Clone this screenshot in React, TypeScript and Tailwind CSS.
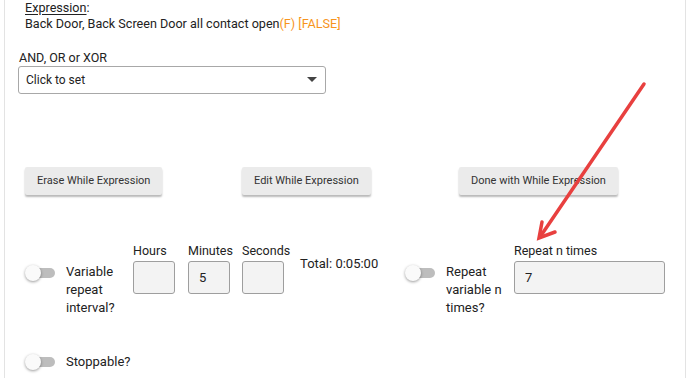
function Toggle() {
  return (
    <div className="relative h-[16px] w-[30px] shrink-0">
      <div className="absolute left-[6px] top-[3px] h-[10px] w-[24px] rounded-full bg-[#bdbdbd]" />
      <div className="absolute left-0 top-0 h-[16px] w-[16px] rounded-full bg-[#fafafa] shadow-[0_1px_3px_rgba(0,0,0,0.4)]" />
    </div>
  );
}

function NumberBox({ label, value, width }: { label: string; value?: string; width: string }) {
  return (
    <div className={`flex flex-col ${width}`}>
      <span className="h-[20px] whitespace-nowrap text-[12.5px] leading-[20px] text-[#222]">{label}</span>
      <div className="flex h-[33px] items-center rounded-[3px] border border-[#9e9e9e] bg-[#f3f3f3] px-[10px] text-[13px] text-[#222]">
        {value}
      </div>
    </div>
  );
}

function ActionButton({ children }: { children: string }) {
  return (
    <button className="h-[28px] rounded-[2px] bg-[#ebebeb] px-[12px] text-[11px] text-[#333] shadow-[0_2px_2px_rgba(0,0,0,0.28)]">
      {children}
    </button>
  );
}

export default function App() {
  return (
    <div className="h-[378px] w-[690px] overflow-hidden bg-white" style={{ fontFamily: 'Roboto, "Liberation Sans", sans-serif' }}>
      <div className="relative ml-[4px] h-[378px] w-[682px] border-x border-[#e3e3e3]">
        <div className="pl-[20px] text-[12.6px] leading-[16px] text-[#222]">
          <div>
            <span className="underline underline-offset-[2px]">Expression</span>:
          </div>
          <div>
            Back Door, Back Screen Door all contact open
            <span className="text-[#f7941d]">(F) [FALSE]</span>
          </div>
        </div>

        <div className="mt-[18px] pl-[14px] text-[12.5px] leading-[15px] text-[#222]">AND, OR or XOR</div>
        <div className="ml-[13px] mt-[1px] flex h-[28px] w-[308px] items-center justify-between rounded-[3px] border border-[#a8a8a8] pl-[7px] pr-[8px] text-[12px] text-[#222]">
          <span>Click to set</span>
          <svg width="10" height="6" viewBox="0 0 10 6">
            <path d="M0 0h10L5 5z" fill="#444" />
          </svg>
        </div>

        <div className="mt-[73px] grid grid-cols-[217px_217px_217px] pl-[20px]">
          <div><ActionButton>Erase While Expression</ActionButton></div>
          <div><ActionButton>Edit While Expression</ActionButton></div>
          <div><ActionButton>Done with While Expression</ActionButton></div>
        </div>

        <div className="mt-[46px] flex pl-[20px]">
          <div className="flex w-[380px]">
            <div className="mt-[24px]"><Toggle /></div>
            <div className="ml-[11px] mt-[22px] w-[60px] text-[13px] leading-[18px] text-[#222]">
              Variable repeat interval?
            </div>
            <div className="ml-[7px] flex">
              <NumberBox label="Hours" width="w-[42px]" />
              <div className="ml-[13px]"><NumberBox label="Minutes" value="5" width="w-[42px]" /></div>
              <div className="ml-[12px]"><NumberBox label="Seconds" width="w-[42px]" /></div>
            </div>
            <div className="ml-[16px] mt-[15px] text-[13px] leading-[16px] text-[#222]">Total: 0:05:00</div>
          </div>
          <div className="flex">
            <div className="mt-[24px]"><Toggle /></div>
            <div className="ml-[11px] mt-[22px] w-[62px] text-[13px] leading-[18px] text-[#222]">
              Repeat variable n times?
            </div>
            <div className="ml-[6px]">
              <NumberBox label="Repeat n times" value="7" width="w-[151px]" />
            </div>
          </div>
        </div>

        <div className="mt-[36px] flex items-center pl-[20px]">
          <Toggle />
          <span className="ml-[11px] text-[13px] leading-[18px] text-[#222]">Stoppable?</span>
        </div>

        <svg className="pointer-events-none absolute left-0 top-0" width="682" height="378">
          <g stroke="#e8403f" strokeWidth="3.5" strokeLinecap="round" fill="none">
            <path d="M639 84 L535 237" />
            <path d="M537 222 L534 238 L550 232" />
          </g>
        </svg>
      </div>
    </div>
  );
}
